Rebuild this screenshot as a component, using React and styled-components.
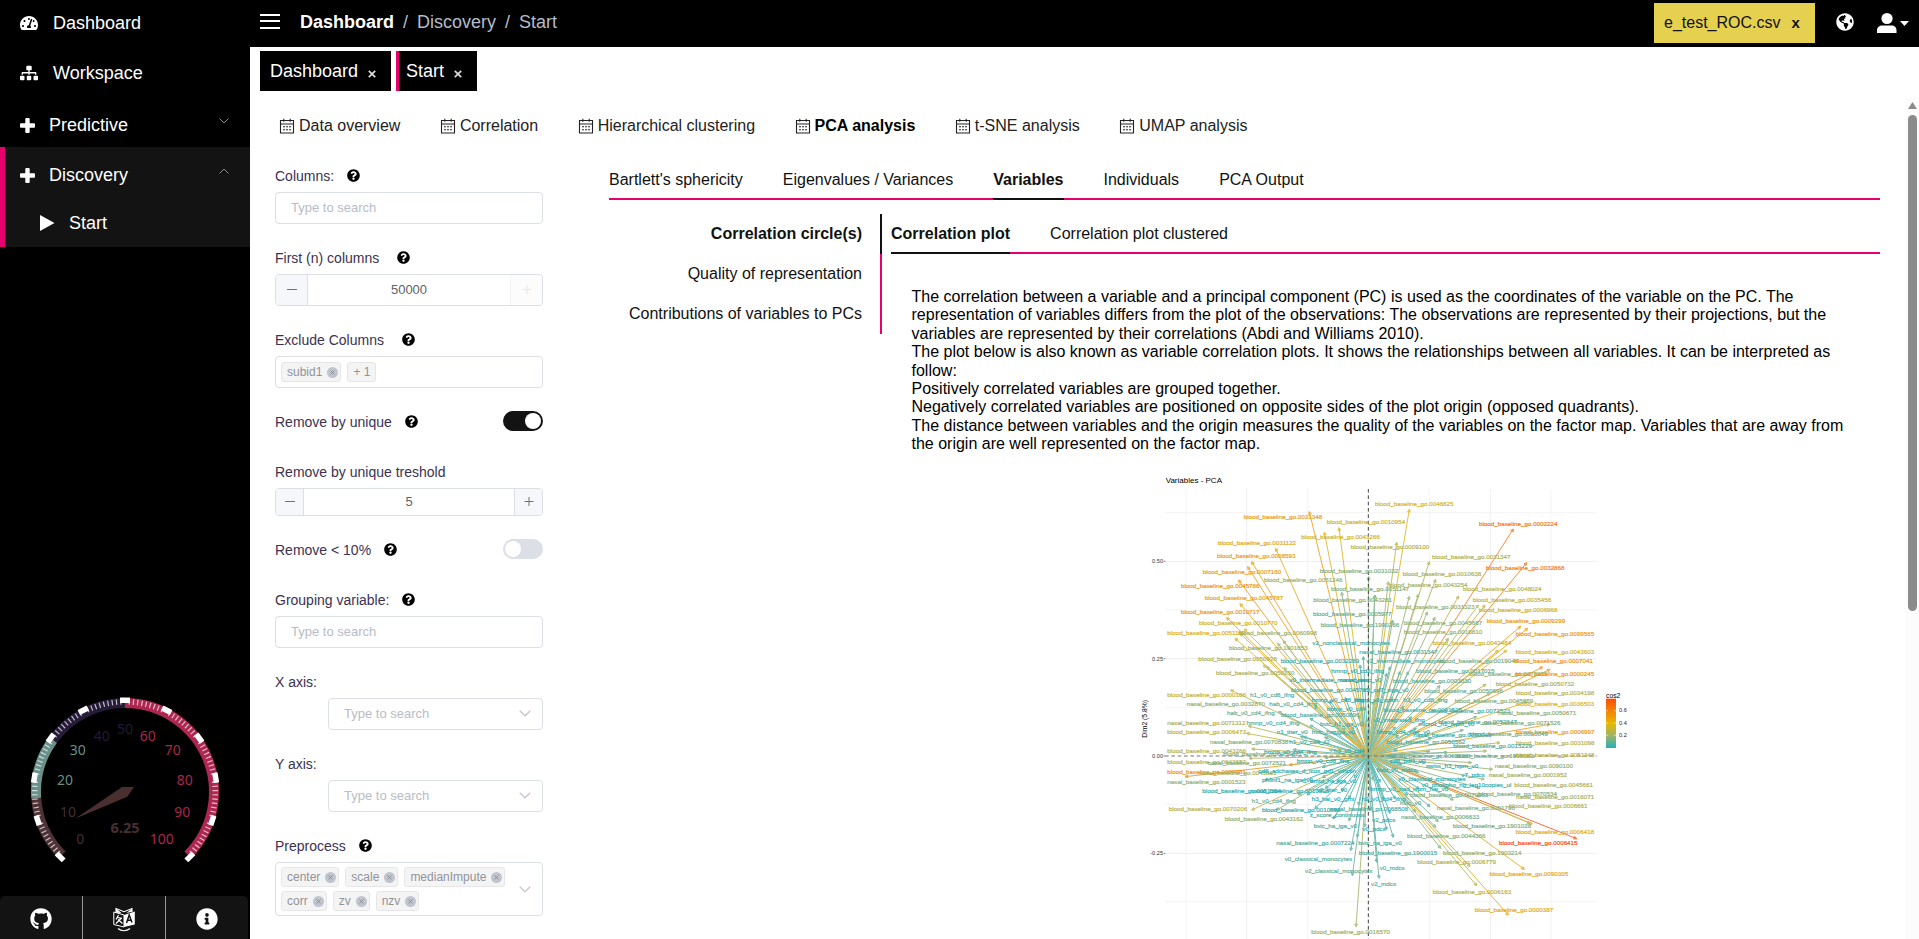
import React from "react";
import styled, { createGlobalStyle } from "styled-components";
import {
  FaTachometerAlt,
  FaSitemap,
  FaGithub,
  FaInfoCircle,
  FaGlobeAmericas,
  FaQuestionCircle,
} from "react-icons/fa";

const pink = "#e6006e";
const line = "#dcdfe6";

const GlobalStyle = createGlobalStyle`
  * { box-sizing: border-box; }
  body {
    margin: 0;
    overflow: hidden;
    background: #fff;
    color: #111;
    font-family: "Liberation Sans", Arial, sans-serif;
    font-size: 16px;
  }
`;

const Page = styled.div`
  display: flex;
  height: 939px;
  overflow: hidden;
`;

/* ---------- sidebar ---------- */
const Sidebar = styled.aside`
  width: 250px;
  flex: none;
  display: flex;
  flex-direction: column;
  background: #000;
  color: #fff;
`;
const Nav = styled.nav`
  flex: 1;
  font-size: 18px;
`;
const NavItem = styled.div`
  display: flex;
  align-items: center;
  height: ${(p) => p.$h || 50}px;
  padding: ${(p) => p.$top || 0}px 21px ${(p) => p.$bottom || 0}px ${(p) => p.$left || 20}px;
  gap: ${(p) => p.$gap || 15}px;
  svg { flex: none; }
`;
const NavLabel = styled.span`
  flex: 1;
`;
const NavGroup = styled.div`
  background: #131313;
  border-left: 5px solid ${pink};
`;
const NavArrow = styled.svg`
  width: 10px;
  height: 6px;
  margin-bottom: 9px;
`;
const GaugeBox = styled.svg`
  display: block;
  width: 250px;
  height: 186px;
  margin-bottom: 30px;
  font-family: "Noto Sans", sans-serif;
`;
const FootBar = styled.div`
  display: flex;
  width: 248px;
  height: 43px;
  background: #131313;
  border-radius: 5px 5px 0 0;
`;
const FootButton = styled.div`
  flex: 1;
  display: flex;
  align-items: center;
  justify-content: center;
  padding-top: 3px;
  & + & { border-left: 1px solid #999; }
`;

/* ---------- header ---------- */
const Main = styled.main`
  flex: 1;
  min-width: 0;
  display: flex;
  flex-direction: column;
`;
const Header = styled.header`
  height: 47px;
  flex: none;
  background: #000;
  display: flex;
  align-items: center;
  padding: 0 10px;
  color: #fff;
`;
const Burger = styled.div`
  width: 20px;
  height: 15px;
  margin: 0 20px 5px 0;
  display: flex;
  flex-direction: column;
  justify-content: space-between;
`;
const BurgerBar = styled.div`
  height: 2px;
  background: #fff;
`;
const Crumbs = styled.div`
  flex: 1;
  display: flex;
  gap: 9px;
  padding-bottom: 2px;
  font-size: 18px;
`;
const Crumb = styled.span`
  color: ${(p) => (p.$on ? "#fff" : "#b4bccc")};
  font-weight: ${(p) => (p.$on ? 700 : 400)};
`;
const FileTag = styled.div`
  width: 161px;
  height: 40px;
  margin-bottom: 1px;
  padding: 0 10px 1px;
  background: #e5d04f;
  color: #111;
  display: flex;
  align-items: center;
  gap: 11px;
`;
const FileClose = styled.b`
  font-size: 15px;
`;
const HeaderIcons = styled.div`
  display: flex;
  align-items: center;
  padding: 0 0 3px 21px;
`;
const UserIcon = styled.svg`
  width: 32px;
  height: 20px;
  margin: 1px 0 0 23px;
`;

const PageTabs = styled.div`
  display: flex;
  gap: 5px;
  padding: 4px 10px 6px;
`;
const PageTab = styled.div`
  width: ${(p) => p.$w}px;
  height: 40px;
  padding: 0 0 0 ${(p) => (p.$active ? 7 : 10)}px;
  border-left: ${(p) => (p.$active ? `3px solid ${pink}` : "0")};
  background: #000;
  color: #fff;
  font-size: 18px;
  display: flex;
  align-items: center;
  gap: 10px;
`;
const TabClose = styled.svg`
  width: 8px;
  height: 8px;
  margin-top: 5px;
`;

/* ---------- scrolling body ---------- */
const Scroller = styled.div`
  flex: 1;
  min-height: 0;
  display: flex;
  overflow: hidden;
`;
const Content = styled.div`
  flex: 1;
  padding: 8px 25px 0 25px;
  overflow: hidden;
`;
const Rail = styled.div`
  width: 14px;
  flex: none;
  background: #fcfcfc;
  padding: 5px 2px 0 3px;
`;
const RailArrow = styled.svg`
  display: block;
  width: 9px;
  height: 7px;
`;
const Thumb = styled.div`
  width: 9px;
  height: 496px;
  margin-top: 6px;
  border-radius: 5px;
  background: #8b8b8b;
`;

const SectionTabs = styled.div`
  display: flex;
  gap: 39.5px;
  height: 40px;
  padding: 1px 0 0 4px;
  align-items: center;
`;
const SectionTab = styled.div`
  display: flex;
  align-items: center;
  gap: 4px;
  font-weight: ${(p) => (p.$active ? 700 : 400)};
  color: ${(p) => (p.$active ? "#000" : "#222")};
`;

const Columns = styled.div`
  display: flex;
  padding-top: 15px;
`;
const Form = styled.div`
  width: 268px;
  flex: none;
  font-size: 14px;
  color: #3d3152;
`;
const Field = styled.div`
  margin-bottom: 18px;
`;
const LabelRow = styled.div`
  display: flex;
  align-items: center;
  height: 32px;
`;
const Help = styled(FaQuestionCircle)`
  width: 13px;
  height: 13px;
  color: #000;
  margin-left: ${(p) => p.$gap}px;
  margin-bottom: 1px;
`;
const Control = styled.div`
  display: flex;
  align-items: center;
  justify-content: space-between;
  width: ${(p) => p.$w || 268}px;
  height: ${(p) => p.$h || 32}px;
  margin-left: auto;
  border: 1px solid ${line};
  border-radius: 4px;
  padding: 0 ${(p) => (p.$tags ? "11px 0 5px" : "11px 1px 15px")};
  font-size: 13px;
  color: #b8bcc6;
`;
const Stepper = styled.div`
  display: flex;
  height: ${(p) => p.$h}px;
  border: 1px solid ${line};
  border-radius: 4px;
  overflow: hidden;
`;
const StepButton = styled.div`
  width: ${(p) => p.$w}px;
  flex: none;
  display: flex;
  align-items: center;
  justify-content: center;
  background: #f5f7fa;
  border: 0 solid ${line};
  border-width: ${(p) => (p.$right ? "0 0 0 1px" : "0 1px 0 0")};
  opacity: ${(p) => (p.$off ? 0.35 : 1)};
  color: ${(p) => (p.$off ? "#b0b4bd" : "#707277")};
  padding-bottom: 2px;
`;
const StepValue = styled.div`
  flex: 1;
  display: flex;
  align-items: center;
  justify-content: center;
  font-size: 13px;
  color: #606266;
  padding-bottom: 2px;
`;
const Tags = styled.div`
  display: flex;
  flex-wrap: wrap;
  gap: 4px 6px;
  width: ${(p) => p.$w || 240}px;
`;
const Tag = styled.div`
  height: 20px;
  display: flex;
  align-items: center;
  gap: 5px;
  padding: 0 ${(p) => (p.$plain ? 5 : 2)}px 0 5px;
  border: 1px solid #e6e6e8;
  border-radius: 3px;
  background: #f4f4f5;
  color: #909399;
  font-size: 12px;
`;
const TagDot = styled.svg`
  width: 11px;
  height: 11px;
`;
const Switch = styled.div`
  width: 40px;
  height: 20px;
  margin: 0 0 2px auto;
  padding: 2px;
  border-radius: 10px;
  background: ${(p) => (p.$on ? "#131313" : line)};
  display: flex;
  justify-content: ${(p) => (p.$on ? "flex-end" : "flex-start")};
`;
const Knob = styled.div`
  width: 16px;
  height: 16px;
  border-radius: 8px;
  background: #fff;
`;

/* ---------- results ---------- */
const Results = styled.div`
  width: 1271px;
  flex: none;
  margin-left: 66px;
`;
const TabLine = styled.div`
  display: flex;
  gap: 40px;
  height: 40px;
  box-shadow: inset 0 -2px 0 ${pink};
`;
const LineTab = styled.div`
  height: 40px;
  line-height: 40px;
  box-shadow: ${(p) => (p.$active ? "inset 0 -2px 0 #111" : "none")};
  font-weight: ${(p) => (p.$active ? 700 : 400)};
`;
const Split = styled.div`
  display: flex;
  margin-top: 14px;
`;
const SideTabs = styled.div`
  width: 273px;
  flex: none;
  margin-right: 9px;
`;
const SideTab = styled.div`
  height: 40px;
  line-height: 40px;
  text-align: right;
  padding-right: 18px;
  border-right: 2px solid ${(p) => (p.$active ? "#111" : pink)};
  font-weight: ${(p) => (p.$active ? 700 : 400)};
`;
const Pane = styled.div`
  flex: 1;
`;
const PaneBody = styled.div`
  padding: 34px 20px 0 20.5px;
`;
const Prose = styled.div`
  line-height: 18.4px;
  color: #000;
`;
const Plot = styled.svg`
  display: block;
  width: 512px;
  height: 500px;
  margin: 11px auto 0;
`;

/* ---------- small drawings ---------- */
const NavPlus = () => (
  <svg width="15" height="15" viewBox="0 0 15 15" fill="#fff">
    <rect y="5.3" width="15" height="4.4" rx="1" />
    <rect x="5.3" width="4.4" height="15" rx="1" />
  </svg>
);
const NavPlay = () => (
  <svg width="16" height="16" viewBox="0 0 16 16">
    <path d="M1 0 15.500 8 1 16z" fill="#fff" />
  </svg>
);
const Chevron = ({ up }) => (
  <NavArrow viewBox="0 0 10 6">
    <path d={up ? "M.5 5.5 5 1l4.5 4.5" : "M.5.5 5 5 9.5.5"} fill="none" stroke="#8a8a8a" />
  </NavArrow>
);
const SelectArrow = () => (
  <svg width="12" height="7" viewBox="0 0 12 7">
    <path d="M.7.7 6 5.8 11.3.7" fill="none" stroke="#c0c4cc" strokeWidth="1.2" />
  </svg>
);
const Cross = () => (
  <TabClose viewBox="0 0 8 8">
    <path d="M.8.8 7.2 7.2M7.2.8.8 7.2" stroke="#ddd" strokeWidth="1.7" />
  </TabClose>
);
const CalendarIcon = () => (
  <svg width="16" height="16" viewBox="0 0 16 16" fill="none" stroke="#222" strokeWidth="1.1">
    <path d="M1.500 2.500h13v12.500h-13zM1.500 6h13M4.800 .8v3M11.200 .8v3" />
    <path d="M4 8.800h8M4 11.800h8" strokeDasharray="2 1" />
  </svg>
);
const TagX = () => (
  <TagDot viewBox="0 0 11 11">
    <circle cx="5.5" cy="5.5" r="5.5" fill="#c0c4cc" />
    <path d="m3.5 3.5 4 4m0-4-4 4" stroke="#85888f" strokeWidth=".9" />
  </TagDot>
);
const Minus = () => (
  <svg width="10" height="10" viewBox="0 0 10 10">
    <path d="M0 5.5h10" stroke="currentColor" />
  </svg>
);
const Plus = () => (
  <svg width="10" height="10" viewBox="0 0 10 10">
    <path d="M.5 5.5h9M5 1v9" stroke="currentColor" />
  </svg>
);
const TranslateIcon = () => (
  <svg width="22" height="25" viewBox="0 0 22 25">
    <path d="M3 5.500V1.500l8 3.200 8-3.200v3.500" fill="none" stroke="#fff" strokeWidth="1.100" />
    <path d="M3 1.500 8.500 6 3 5.800zM19 1.500 13.500 6l5.500-1.200z" fill="#fff" />
    <path d="M.8 5 11 8v12L.8 17.500z" fill="#131313" stroke="#fff" />
    <path d="M21.800 4.500 11 8v12l10.800-2.500z" fill="#fff" />
    <path d="M5 21.500c3 3 8.500 3 12 0" fill="none" stroke="#fff" strokeWidth="1.200" />
    <path d="M5.500 8 3 12.500M4.500 10.500l4.500.8M8.500 11 3 16.500M5 12.500l4.500 4" stroke="#fff" fill="none" strokeWidth="1.200" />
    <path d="m13.500 16 2.700-8 2.800 7.500M14.300 13.500l3.800-.5" fill="none" stroke="#131313" strokeWidth="1.500" />
  </svg>
);

/* ---------- gauge ---------- */
const polar = (value, r) => {
  const a = ((135 + value * 2.7) * Math.PI) / 180;
  return [125 + r * Math.cos(a), 112 + r * Math.sin(a)];
};
const arc = (from, to) => {
  const [x1, y1] = polar(from, 89);
  const [x2, y2] = polar(to, 89);
  return `M${x1} ${y1}A89 89 0 0 1 ${x2} ${y2}`;
};
const gaugeLabels = [
  [0, 80.3, 159, "#452e31"], [10, 68, 131.7, "#452e31"], [20, 65, 99.7, "#688f87"],
  [30, 77.7, 70, "#688f87"], [40, 101.7, 55.7, "#231b35"], [50, 125, 49, "#231b35"],
  [60, 147.7, 55.7, "#a8264f"], [70, 172.7, 70, "#a8264f"], [80, 184.7, 99.7, "#a8264f"],
  [90, 182.3, 131.7, "#a8264f"], [100, 161.7, 159, "#a8264f"],
];
const Gauge = () => (
  <GaugeBox viewBox="0 0 250 186">
    <g fill="none" strokeWidth="10">
      <path d={arc(0, 15.2)} stroke="#4f3235" />
      <path d={arc(15.2, 30)} stroke="#6a9189" />
      <path d={arc(30, 50)} stroke="#261c39" />
      <path d={arc(50, 100)} stroke="#ad2751" />
    </g>
    {Array.from({ length: 101 }, (_, i) => {
      const major = i % 10 === 0;
      return (
        <rect
          key={i}
          x={major ? -5 : -0.6}
          y={major ? -94.5 : -93}
          width={major ? 10 : 1.2}
          height={5.5}
          fill="#fff"
          opacity={major ? 1 : 0.7}
          transform={`translate(125 112) rotate(${i * 2.7 - 135})`}
        />
      );
    })}
    <path d="M75 138.700 122 107h12l-6.700 9.700z" fill="#4a2f31" />
    {gaugeLabels.map(([n, x, y, c]) => (
      <text key={n} x={x} y={y + 5} fontSize="14" textAnchor="middle" fill={c}>{n}</text>
    ))}
    <text x="125" y="153" fontSize="14.500" fontWeight="700" textAnchor="middle" fill="#4a2f31">6.25</text>
  </GaugeBox>
);

/* ---------- correlation plot ---------- */
const stops = [
  [0, [15, 170, 183]], [0.15, [95, 172, 150]], [0.25, [163, 175, 92]],
  [0.38, [222, 178, 15]], [0.55, [245, 138, 5]], [0.76, [252, 70, 10]],
];
const tint = (v) => {
  let i = 1;
  while (i < stops.length - 1 && v > stops[i][0]) i++;
  const [a, ca] = stops[i - 1];
  const [b, cb] = stops[i];
  const t = Math.max(0, Math.min(1, (v - a) / (b - a)));
  return `rgb(${ca.map((c, k) => Math.round(c + (cb[k] - c) * t)).join(",")})`;
};
const quad = (dx, dy, rows) => rows.map(([x, y, ...rest]) => [x + dx, y + dy, ...rest]);

const labels = [
  ...quad(0, 0, [
    [341, 155, "B0031348", 0.48], [590, 171, "B0010954", 0.34], [514, 216, "B0043266", 0.35],
    [264, 233, "B0031122", 0.43], [261, 273, "B0008593", 0.48], [218, 320, "B0007160", 0.48],
    [153, 362, "B0045786", 0.52], [224, 398, "B0045787", 0.45], [153, 442, "B0010717", 0.5],
    [207, 473, "B0010770", 0.35], [112, 503, "B0051169", 0.4], [325, 505, "B0060998", 0.25],
    [297, 549, "B1901653", 0.23], [205, 581, "B0050926", 0.28], [258, 623, "B0050150", 0.26],
    [662, 247, "B0009100", 0.28], [569, 317, "B0031032", 0.2], [402, 346, "B0051246", 0.23],
    [603, 373, "B0051147", 0.2], [550, 405, "B0043281", 0.2], [549, 446, "B0005977", 0.16],
    [572, 479, "B1990266", 0.17], [547, 533, "v2_nonclassical_monocytes", 0.08],
    [688, 560, "N0031347", 0.1], [452, 588, "B0032289", 0.07], [709, 588, "v2_intermediate_monocytes", 0.1],
    [604, 617, "hmnp_v0_cd3_ifng", 0.05], [478, 646, "v0_intermediate_monocytes", 0.03],
    [630, 646, "nasal_assc_v0", 0.06], [483, 675, "B0045785", 0.08], [700, 675, "v2_cd7_siga_v0", 0.06],
    [545, 705, "hmnp_v0_cd8_ifng", 0.03], [112, 689, "B0000186", 0.32], [360, 689, "h1_v0_cd8_ifng", 0.13],
    [672, 705, "hmnp_v0_vpsm", 0.02],
  ]),
  ...quad(720, 0, [
    [15, 118, "B0046825", 0.37], [327, 176, "B0002224", 0.62], [186, 275, "B0031347", 0.28],
    [348, 309, "B0032868", 0.6], [98, 327, "B0010638", 0.26], [57, 359, "B0043254", 0.25],
    [279, 373, "B0048024", 0.3], [308, 404, "B0035456", 0.31], [78, 425, "B0031323", 0.22],
    [327, 436, "B0006968", 0.34], [350, 468, "B0009299", 0.5], [101, 474, "B0045667", 0.21],
    [101, 502, "B0016810", 0.23], [437, 507, "B0099565", 0.5], [188, 534, "B0043484", 0.34],
    [437, 560, "B0043603", 0.36], [209, 588, "B0019048", 0.18], [433, 588, "B0007041", 0.54],
    [138, 617, "B0017015", 0.14], [297, 628, "B0070315", 0.22], [437, 628, "B0000245", 0.52],
    [68, 647, "B0003030", 0.12], [377, 657, "B0050732", 0.27], [163, 677, "B0050896", 0.17],
    [437, 685, "B0034198", 0.3], [100, 705, "h3_v0_cd8_ifng", 0.08], [254, 709, "B0045859", 0.2],
    [437, 716, "B0036503", 0.38],
  ]),
  ...quad(0, 705, [
    [170, 12, "N0032870", 0.22], [418, 12, "hab_v0_cd4_ifng", 0.13], [291, 40, "hab_v0_cd4_ifng", 0.16],
    [453, 45, "B0050896", 0.12], [112, 68, "N0071312", 0.27], [350, 68, "hmnp_v0_cd4_ifng", 0.12],
    [112, 97, "B0006473", 0.31], [440, 97, "n1_titer_v0", 0.07], [545, 97, "hvic_ha_iga_v0", 0.05],
    [240, 125, "N0070838", 0.2], [478, 127, "h1_v0_cd4_il2", 0.08], [112, 153, "B0043266", 0.28],
    [280, 162, "B0050821", 0.2], [402, 157, "bmnp_v0_cd4_ifng", 0.04], [112, 185, "B0043692", 0.28],
    [233, 190, "N0072521", 0.2], [500, 184, "bmnp_v0_cd8_ifna", 0.04], [112, 217, "B0000981", 0.55],
    [205, 219, "N0045861", 0.25], [385, 212, "cd8_adchases_d_icos_gd1_vrhctin", 0.04],
    [112, 247, "N0001523", 0.22], [396, 240, "phfinf1_na_iga_v0", 0.02], [540, 242, "bmtd_ha_iga_v0", 0.04],
    [217, 273, "B0051354", 0.04], [363, 273, "N0010896", 0.05], [560, 270, "v2_titer_v0", 0.05],
    [365, 302, "h1_v0_cd4_ifng", 0.16], [545, 297, "h3_hai_v0_gmt", 0.02], [695, 297, "h2_v0_cd4_ifng", 0.03],
    [116, 328, "B0070206", 0.3], [396, 330, "B0010896", 0.02], [600, 326, "N0068508", 0.1],
    [539, 346, "z_score_continuous", 0.1], [284, 357, "B0043162", 0.23], [726, 359, "v2_pdcs", 0.06],
    [551, 377, "bvic_ha_iga_v0", 0.09], [697, 387, "v0_pdcs", 0.05], [439, 430, "N0007224", 0.12],
    [685, 430, "bvic_na_iga_v0", 0.1], [464, 478, "v0_classical_monocytes", 0.13],
    [686, 459, "B1900015", 0.13], [525, 513, "v2_classical_monocytes", 0.15], [749, 503, "v0_mdcs", 0.14],
    [723, 551, "v2_mdcs", 0.14], [544, 697, "B0016570", 0.24],
    [570, 72, "bvic_h1_iga_v0", 0.05], [590, 28, "bbmp_v0_cd4", 0.08], [612, 153, "h3_v0_cd4", 0.03],
  ]),
  ...quad(720, 705, [
    [185, 32, "B0072523", 0.1], [384, 40, "N0050671", 0.21], [205, 65, "B0052647", 0.11],
    [337, 68, "N0071526", 0.2], [145, 72, "micro1_h1_ivpm_v0", 0.02], [438, 97, "B0006997", 0.5],
    [298, 101, "B0050049", 0.18], [130, 106, "N0050049", 0.06], [438, 128, "B0031098", 0.3],
    [250, 137, "B0015229", 0.1], [50, 127, "B0050562", 0.1], [60, 168, "B0003828", 0.14],
    [255, 168, "B1990182", 0.18], [438, 165, "B0051348", 0.3], [167, 197, "swiss_h3_ivpm_v0", 0.05],
    [374, 197, "N0090100", 0.22], [274, 224, "v7_pdcs", 0.03], [356, 225, "N0001952", 0.25],
    [85, 238, "v0_classical_monocytes", 0.03], [155, 255, "v0_phospho_ng_leg10copies_ul", 0.06],
    [433, 254, "B0045661", 0.27], [120, 285, "B0070381", 0.17], [325, 282, "B0070534", 0.2],
    [438, 290, "N0016071", 0.25], [200, 324, "N0001796", 0.2], [417, 319, "B0006661", 0.29],
    [93, 351, "N0006633", 0.17], [248, 379, "B1901028", 0.18], [437, 397, "B0006418", 0.42],
    [387, 428, "B0006415", 0.76], [111, 407, "B0044366", 0.2], [219, 459, "B1903214", 0.23],
    [142, 487, "B0006779", 0.27], [359, 523, "B0090305", 0.43], [188, 575, "B0006163", 0.29],
    [314, 631, "B0000387", 0.43], [40, 30, "B0001525", 0.08], [10, 60, "v2_integrated_ifng", 0.06],
    [20, 95, "hmnp_cd4_titer_v0", 0.04], [60, 182, "cd8_pdl1_v0", 0.03], [20, 210, "bvic_v0_mdcs", 0.04],
    [0, 268, "bmnp_v0_nad_ivpm_hai_v0", 0.04], [90, 308, "hvic_v0", 0.12],
  ]),
];

const tips = [
  ...Array.from({ length: 58 }, (_, i) => {
    const a = i * 2.39996;
    const r = 70 + ((i * 47) % 150);
    return [715 + r * Math.cos(a) * 1.1, 873 + r * Math.sin(a), 0.02 + ((i * 7) % 15) / 100];
  }),
  ...quad(0, 0, [
    [538, 140, 0.48], [583, 202, 0.37], [627, 188, 0.37], [437, 250, 0.43], [365, 290, 0.48],
    [353, 305, 0.48], [326, 345, 0.5], [330, 416, 0.45], [290, 458, 0.48], [343, 492, 0.36],
    [315, 520, 0.4], [443, 535, 0.23], [460, 527, 0.23], [400, 600, 0.28], [462, 608, 0.22],
    [302, 675, 0.32], [716, 335, 0.2], [635, 382, 0.2], [735, 390, 0.18], [700, 575, 0.12],
    [690, 600, 0.08], [330, 505, 0.38], [410, 605, 0.3], [775, 350, 0.28],
  ]),
  ...quad(720, 0, [
    [118, 133, 0.38], [80, 232, 0.3], [178, 290, 0.28], [430, 192, 0.62], [470, 293, 0.62],
    [197, 343, 0.26], [145, 388, 0.24], [118, 394, 0.22], [14, 390, 0.2], [172, 441, 0.22],
    [266, 393, 0.3], [345, 420, 0.31], [325, 420, 0.3], [195, 457, 0.22], [235, 520, 0.23],
    [452, 484, 0.48], [473, 490, 0.48], [410, 556, 0.36], [385, 556, 0.36], [518, 606, 0.52],
    [540, 613, 0.5], [348, 658, 0.26], [60, 605, 0.14], [90, 620, 0.14], [115, 620, 0.16],
    [210, 662, 0.17], [50, 625, 0.1], [360, 685, 0.28], [68, 465, 0.16],
  ]),
  ...quad(0, 705, [
    [355, 78, 0.27], [350, 100, 0.31], [365, 147, 0.27], [357, 175, 0.27], [165, 230, 0.53],
    [365, 330, 0.3], [505, 285, 0.18], [610, 357, 0.07], [662, 452, 0.13], [667, 527, 0.15],
    [678, 680, 0.25], [740, 487, 0.13], [747, 535, 0.14], [405, 240, 0.2], [440, 330, 0.22],
    [682, 412, 0.12], [445, 35, 0.2], [540, 55, 0.1], [520, 110, 0.08],
  ]),
  ...quad(720, 705, [
    [540, 73, 0.5], [390, 128, 0.3], [350, 153, 0.26], [232, 157, 0.16], [305, 188, 0.22],
    [368, 208, 0.23], [343, 238, 0.24], [330, 265, 0.2], [487, 372, 0.43], [620, 416, 0.74],
    [463, 508, 0.44], [320, 557, 0.3], [415, 645, 0.44], [212, 445, 0.2], [205, 365, 0.18],
    [197, 382, 0.18], [300, 500, 0.28], [180, 320, 0.14], [60, 340, 0.06], [50, 390, 0.08],
    [70, 412, 0.1], [472, 5, 0.38], [250, 300, 0.2], [320, 50, 0.2], [280, 90, 0.18],
    [330, 290, 0.24], [480, 370, 0.3],
  ]),
];

const expand = (s) =>
  s.replace(/^B(?=\d)/, "blood_baseline_go.").replace(/^N(?=\d)/, "nasal_baseline_go.");

const Arrow = ({ x, y, v }) => {
  const a = Math.atan2(y - 873, x - 715);
  const barb = (d) => `${x - 9 * Math.cos(a + d)} ${y - 9 * Math.sin(a + d)}`;
  return <path d={`M715 873 ${x} ${y}M${barb(0.5)} ${x} ${y} ${barb(-0.5)}z`} stroke={tint(v)} />;
};

const CorrelationPlot = () => (
  <Plot viewBox="0 0 1536 1500" fontFamily="Liberation Sans, Arial, sans-serif">
    <defs>
      <linearGradient id="cos" x1="0" y1="0" x2="0" y2="1">
        <stop offset="0" stopColor="#fc4e07" />
        <stop offset=".5" stopColor="#e7b800" />
        <stop offset=".75" stopColor="#a0b468" />
        <stop offset="1" stopColor="#20b0ba" />
      </linearGradient>
    </defs>
    <g stroke="#efefef" fill="none">
      <path d="M350 72V1500M1081 72V1500M105 289H1400M105 581H1400M105 1165H1400" strokeWidth="3" />
      <path d="M168 72V1500M533 72V1500M898 72V1500M1263 72V1500M105 143H1400M105 435H1400M105 727H1400M105 1018H1400M105 1310H1400" strokeWidth="1.800" />
    </g>
    <text x="107" y="54" fontSize="24" fill="#000">Variables - PCA</text>
    <g fontSize="16.800" fill="#333" textAnchor="end">
      <text x="99" y="295">0.50</text>
      <text x="99" y="587">0.25</text>
      <text x="99" y="879">0.00</text>
      <text x="99" y="1171">-0.25</text>
    </g>
    <path d="M101 289h5M101 581h5M101 873h5M101 1165h5" stroke="#444" strokeWidth="2" />
    <text transform="translate(51 818) rotate(-90)" fontSize="20.400" fill="#000">Dim2 (5.8%)</text>
    <g fill="none" strokeWidth="3" opacity=".8">
      {tips.map(([x, y, v], i) => <Arrow key={i} x={x} y={y} v={v} />)}
    </g>
    <path d="M105 873H1400" stroke="#777" strokeWidth="3" strokeDasharray="11 8" />
    <path d="M715 72V1500" stroke="#444" strokeWidth="3" strokeDasharray="11 8" />
    <g fontSize="18.800" strokeWidth=".5">
      {labels.map(([x, y, s, v], i) => (
        <text key={i} x={x} y={y + 6} fill={tint(v)} stroke={tint(v)}>{expand(s)}</text>
      ))}
    </g>
    <text x="1428" y="699" fontSize="20.400" fill="#000">cos2</text>
    <rect x="1428" y="701" width="30" height="148" fill="url(#cos)" />
    <path d="M1428 737h6m18 0h6M1428 774h6m18 0h6M1428 811h6m18 0h6" stroke="#fff" strokeWidth="1.500" />
    <g fontSize="16.800" fill="#222">
      <text x="1467" y="742">0.6</text>
      <text x="1467" y="780">0.4</text>
      <text x="1467" y="817">0.2</text>
    </g>
  </Plot>
);

const Labeled = ({ label, gap, children }) => (
  <Field>
    <LabelRow>{label}{gap && <Help $gap={gap} />}</LabelRow>
    {children}
  </Field>
);

const sections = ["Data overview", "Correlation", "Hierarchical clustering", "PCA analysis", "t-SNE analysis", "UMAP analysis"];
const resultTabs = ["Bartlett's sphericity", "Eigenvalues / Variances", "Variables", "Individuals", "PCA Output"];
const sideTabs = ["Correlation circle(s)", "Quality of representation", "Contributions of variables to PCs"];

export default function App() {
  return (
    <Page>
      <GlobalStyle />
      <Sidebar>
        <Nav>
          <NavItem $h={46}><FaTachometerAlt size={18} /><NavLabel>Dashboard</NavLabel></NavItem>
          <NavItem $h={54}><FaSitemap size={18} /><NavLabel>Workspace</NavLabel></NavItem>
          <NavItem $h={47} $top={4} $gap={14}><NavPlus /><NavLabel>Predictive</NavLabel><Chevron /></NavItem>
          <NavGroup>
            <NavItem $h={54} $top={3} $left={15} $gap={14}><NavPlus /><NavLabel>Discovery</NavLabel><Chevron up /></NavItem>
            <NavItem $h={46} $bottom={2} $left={34} $gap={14}><NavPlay /><NavLabel>Start</NavLabel></NavItem>
          </NavGroup>
        </Nav>
        <Gauge />
        <FootBar>
          <FootButton><FaGithub size={22} /></FootButton>
          <FootButton><TranslateIcon /></FootButton>
          <FootButton><FaInfoCircle size={22} /></FootButton>
        </FootBar>
      </Sidebar>
      <Main>
        <Header>
          <Burger><BurgerBar /><BurgerBar /><BurgerBar /></Burger>
          <Crumbs>
            <Crumb $on>Dashboard</Crumb><Crumb>/</Crumb><Crumb>Discovery</Crumb><Crumb>/</Crumb><Crumb>Start</Crumb>
          </Crumbs>
          <FileTag>e_test_ROC.csv <FileClose>x</FileClose></FileTag>
          <HeaderIcons>
            <FaGlobeAmericas size={18} />
            <UserIcon viewBox="0 0 32 20" fill="#fff">
              <ellipse cx="10" cy="5.500" rx="5.600" ry="5.500" />
              <path d="M0 20v-2.500C0 14 2.500 12.500 5.500 12.500h9c3 0 5 1.500 5 5V20zM23 8h9l-4.500 5z" />
            </UserIcon>
          </HeaderIcons>
        </Header>
        <PageTabs>
          <PageTab $w={131}>Dashboard<Cross /></PageTab>
          <PageTab $w={81} $active>Start<Cross /></PageTab>
        </PageTabs>
        <Scroller>
          <Content>
            <SectionTabs>
              {sections.map((s) => (
                <SectionTab key={s} $active={s === "PCA analysis"}><CalendarIcon />{s}</SectionTab>
              ))}
            </SectionTabs>
            <Columns>
              <Form>
                <Labeled label="Columns:" gap={13}><Control>Type to search</Control></Labeled>
                <Labeled label="First (n) columns" gap={18}>
                  <Stepper $h={32}>
                    <StepButton $w={32}><Minus /></StepButton>
                    <StepValue>50000</StepValue>
                    <StepButton $w={32} $right $off><Plus /></StepButton>
                  </Stepper>
                </Labeled>
                <Labeled label="Exclude Columns" gap={18}>
                  <Control $tags><Tags><Tag>subid1<TagX /></Tag><Tag $plain>+ 1</Tag></Tags></Control>
                </Labeled>
                <Field>
                  <LabelRow>Remove by unique<Help $gap={13} /><Switch $on><Knob /></Switch></LabelRow>
                </Field>
                <Labeled label="Remove by unique treshold">
                  <Stepper $h={28}>
                    <StepButton $w={28}><Minus /></StepButton>
                    <StepValue>5</StepValue>
                    <StepButton $w={28} $right><Plus /></StepButton>
                  </Stepper>
                </Labeled>
                <Field>
                  <LabelRow>Remove &lt; 10%<Help $gap={13} /><Switch><Knob /></Switch></LabelRow>
                </Field>
                <Labeled label="Grouping variable:" gap={13}><Control>Type to search</Control></Labeled>
                <Labeled label="X axis:"><Control $w={215}>Type to search<SelectArrow /></Control></Labeled>
                <Labeled label="Y axis:"><Control $w={215}>Type to search<SelectArrow /></Control></Labeled>
                <Labeled label="Preprocess" gap={13}>
                  <Control $tags $h={54}>
                    <Tags>
                      {["center", "scale", "medianImpute", "corr", "zv", "nzv"].map((t) => (
                        <Tag key={t}>{t}<TagX /></Tag>
                      ))}
                    </Tags>
                    <SelectArrow />
                  </Control>
                </Labeled>
              </Form>
              <Results>
                <TabLine>
                  {resultTabs.map((t) => <LineTab key={t} $active={t === "Variables"}>{t}</LineTab>)}
                </TabLine>
                <Split>
                  <SideTabs>
                    {sideTabs.map((t, i) => <SideTab key={t} $active={i === 0}>{t}</SideTab>)}
                  </SideTabs>
                  <Pane>
                    <TabLine>
                      <LineTab $active>Correlation plot</LineTab>
                      <LineTab>Correlation plot clustered</LineTab>
                    </TabLine>
                    <PaneBody>
                      <Prose>
                        The correlation between a variable and a principal component (PC) is used as the coordinates of the variable on the PC. The representation of variables differs from the plot of the observations: The observations are represented by their projections, but the variables are represented by their correlations (Abdi and Williams 2010).<br />
                        The plot below is also known as variable correlation plots. It shows the relationships between all variables. It can be interpreted as follow:<br />
                        Positively correlated variables are grouped together.<br />
                        Negatively correlated variables are positioned on opposite sides of the plot origin (opposed quadrants).<br />
                        The distance between variables and the origin measures the quality of the variables on the factor map. Variables that are away from the origin are well represented on the factor map.
                      </Prose>
                      <CorrelationPlot />
                    </PaneBody>
                  </Pane>
                </Split>
              </Results>
            </Columns>
          </Content>
          <Rail>
            <RailArrow viewBox="0 0 9 7"><path d="M4.500 0 9 7H0z" fill="#8b8b8b" /></RailArrow>
            <Thumb />
          </Rail>
        </Scroller>
      </Main>
    </Page>
  );
}
